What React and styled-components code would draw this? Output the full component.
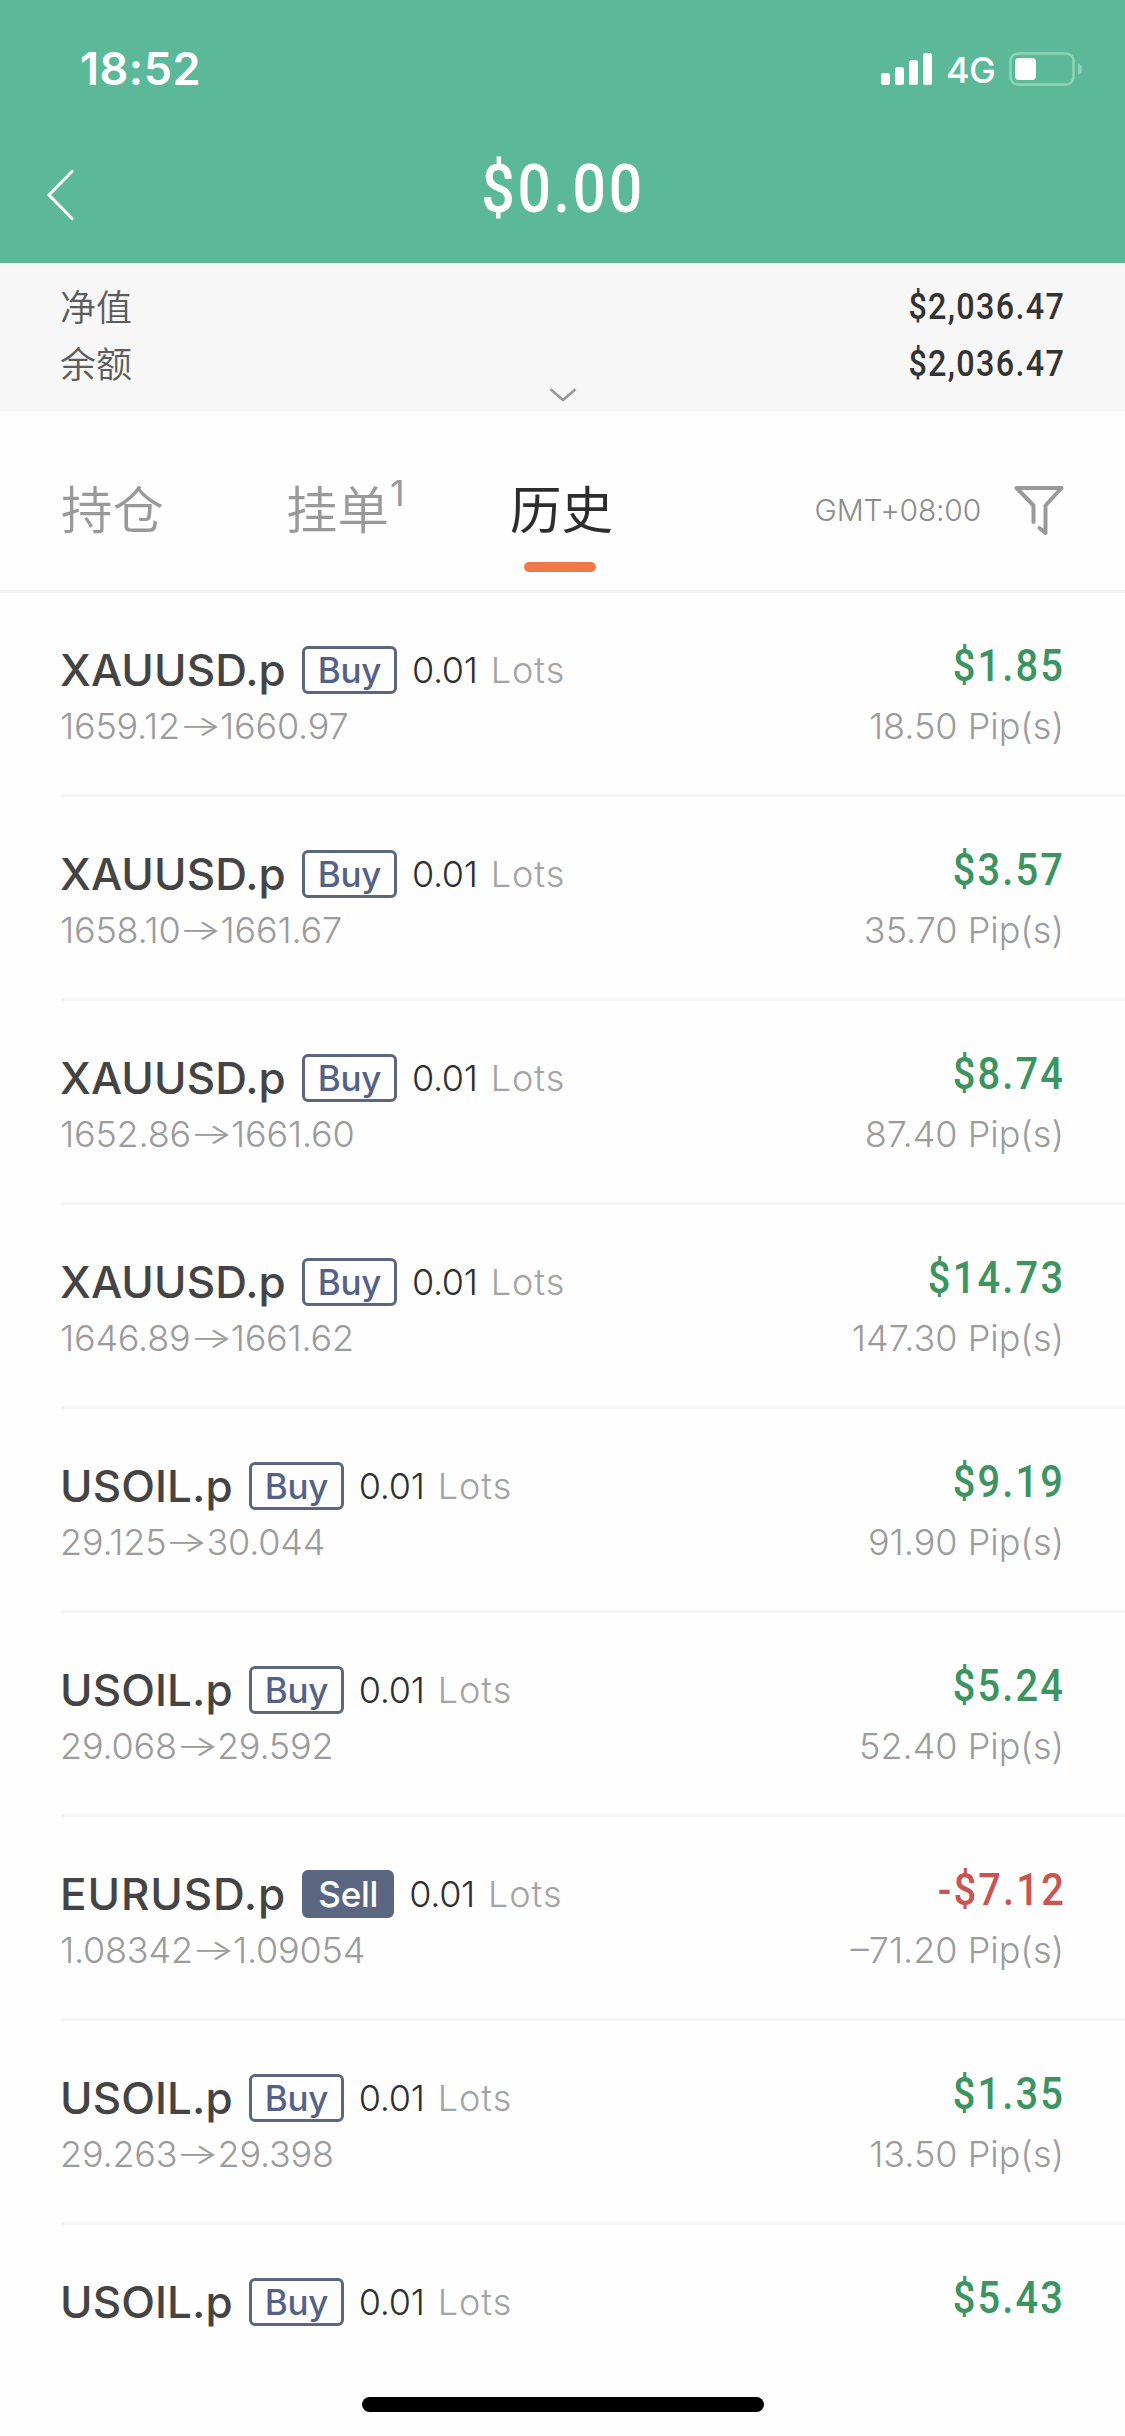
import React from "react";
import styled, { createGlobalStyle } from "styled-components";

const sans = `Inter, "Noto Sans CJK SC", sans-serif`;
const numeric = `Roboto, "Noto Sans CJK SC", sans-serif`;

const GlobalStyle = createGlobalStyle`
  * { box-sizing: border-box; }
  body { margin: 0; background: #fefefe; font-family: ${sans}; }
`;

const Screen = styled.div`
  display: flex;
  flex-direction: column;
  position: relative;
  width: 1125px;
  height: 2436px;
  overflow: hidden;
  background: #fefefe;
`;

const Header = styled.header`
  height: 263px;
  background: #5bb899;
  color: #fff;
`;

const StatusBar = styled.div`
  display: flex;
  align-items: center;
  justify-content: space-between;
  height: 138px;
  padding: 0 43px 0 80px;
`;

const Clock = styled.span`
  font-size: 45px;
  font-weight: 600;
  line-height: 54px;
  letter-spacing: 0.5px;
`;

const StatusIcons = styled.div`
  display: flex;
  align-items: center;
`;

const Network = styled.span`
  margin: 2px 14px 0 14px;
  font-size: 36px;
  font-weight: 450;
  line-height: 44px;
  letter-spacing: -0.8px;
`;

const NavBar = styled.div`
  display: grid;
  grid-template-columns: 120px 1fr 120px;
  align-items: center;
  height: 114px;
`;

const BackButton = styled.button`
  display: flex;
  padding: 0 0 0 45px;
  border: 0;
  background: none;
`;

/* Condensed figures: Roboto narrowed, with looser tracking */
const Profit = styled.h1`
  margin: -13px 0 0;
  text-align: center;
  font-family: ${numeric};
  font-size: 67px;
  font-weight: 500;
  line-height: 80px;
  letter-spacing: 0.045em;
  text-indent: 0.02em;
  transform: scaleX(0.88);
`;

const Summary = styled.section`
  display: flex;
  flex-direction: column;
  align-items: center;
  height: 148px;
  padding: 15px 61px 0 60px;
  background: #f7f7f7;
`;

const SummaryRow = styled.div`
  display: flex;
  justify-content: space-between;
  align-items: center;
  width: 100%;
  height: 57px;
`;

const SummaryLabel = styled.span`
  margin-top: -4px;
  font-family: "Noto Sans CJK SC", sans-serif;
  font-size: 36px;
  font-weight: 350;
  line-height: 54px;
  color: #5c5c5c;
`;

const SummaryValue = styled.span`
  margin-right: -0.025em;
  font-family: ${numeric};
  font-size: 37px;
  font-weight: 500;
  line-height: 54px;
  letter-spacing: 0.04em;
  color: #333;
  transform: scaleX(0.875);
  transform-origin: right center;
`;

const Tabs = styled.nav`
  display: flex;
  align-items: flex-start;
  height: 182px;
  padding: 63px 61px 0;
  border-bottom: 3px solid #f3f3f3;
`;

const Tab = styled.div`
  display: flex;
  flex-direction: column;
  align-items: center;
  margin-right: ${(p) => p.$gap || 0}px;
  color: ${(p) => (p.$active ? "#2d2d2d" : "#999")};
`;

const TabLabel = styled.span`
  display: flex;
  height: 66px;
  font-family: "Noto Sans CJK SC", sans-serif;
  font-size: 51.5px;
  font-weight: ${(p) => (p.$active ? 400 : 350)};
  line-height: 66px;
`;

const TabCount = styled.sup`
  width: 18px;
  margin: 4px 0 0 1px;
  font-family: Inter, sans-serif;
  font-size: 36px;
  font-weight: 400;
  line-height: 30px;
`;

const Underline = styled.i`
  width: 72px;
  height: 10px;
  margin: 22px 4px 0 0;
  border-radius: 5px;
  background: #f0794b;
`;

const Filters = styled.div`
  display: flex;
  align-items: center;
  margin: 9px 0 0 auto;
  gap: 33px;
  height: 54px;
`;

const Zone = styled.span`
  font-size: 30px;
  font-weight: 300;
  letter-spacing: -0.2px;
  color: #8c8c8c;
`;

const List = styled.main`
  display: flex;
  flex-direction: column;
`;

const Row = styled.article`
  display: flex;
  justify-content: space-between;
  height: 204px;
  margin-left: 61px;
  padding-right: 61px;
  border-bottom: 3px solid #f5f5f5;

  &:last-child {
    border-bottom: 0;
  }
`;

const Left = styled.div`
  margin-left: -1px;
  padding-top: 53px;
`;

const Right = styled.div`
  display: flex;
  flex-direction: column;
  align-items: flex-end;
  padding-top: 49px;
`;

const TitleLine = styled.div`
  display: flex;
  align-items: center;
  height: 48px;
`;

const SymbolName = styled.span`
  font-size: 44px;
  font-weight: 500;
  line-height: 48px;
  letter-spacing: ${(p) => p.$tracking}px;
  color: #444;
`;

const Badge = styled.span`
  display: flex;
  align-items: center;
  justify-content: center;
  width: ${(p) => (p.$sell ? 92 : 95)}px;
  height: 48px;
  margin: 0 15px 0 16px;
  border: 3px solid #5b6780;
  border-radius: 6px;
  background: ${(p) => (p.$sell ? "#5b6780" : "transparent")};
  color: ${(p) => (p.$sell ? "#fff" : "#546289")};
  font-size: 35px;
  font-weight: 500;
  line-height: 42px;
  letter-spacing: -0.3px;
`;

const Lots = styled.span`
  font-size: 36px;
  font-weight: 350;
  line-height: 48px;
  color: #2e2e2e;
  letter-spacing: -0.3px;
`;

const LotsUnit = styled.span`
  margin-left: 13px;
  font-size: 36px;
  font-weight: 300;
  line-height: 48px;
  letter-spacing: 1px;
  color: #a3a3a3;
`;

const Detail = styled.div`
  margin-top: ${(p) => p.$top}px;
  font-size: 36px;
  font-weight: 300;
  line-height: 40px;
  letter-spacing: ${(p) => p.$spacing || 0}px;
  white-space: nowrap;
  color: #9b9b9b;
`;

const Arrow = styled.span`
  display: inline-block;
  margin: 0 3px;
  transform: scale(1.28, 0.8);
`;

const Amount = styled.div`
  margin-right: -0.035em;
  font-family: ${numeric};
  font-size: 45px;
  font-weight: 500;
  line-height: 48px;
  letter-spacing: 0.055em;
  color: ${(p) => (p.$loss ? "#c95450" : "#3c9460")};
  transform: scaleX(0.885);
  transform-origin: right center;
`;

const HomeIndicator = styled.div`
  position: absolute;
  left: 362px;
  bottom: 24px;
  width: 402px;
  height: 15px;
  border-radius: 8px;
  background: #000;
`;

const SignalIcon = () => (
  <svg width="51" height="32" viewBox="0 0 51 32" fill="#fff">
    <rect x="0" y="20" width="9" height="12" rx="2.5" />
    <rect x="14" y="14" width="9" height="18" rx="2.5" />
    <rect x="28" y="7" width="9" height="25" rx="2.5" />
    <rect x="42" y="0" width="9" height="32" rx="2.5" />
  </svg>
);

const BatteryIcon = () => (
  <svg width="73" height="34" viewBox="0 0 73 34">
    <rect x="1.5" y="1.5" width="63" height="31" rx="7.5" fill="none" stroke="#8dd3b4" strokeWidth="2.6" />
    <rect x="6" y="6" width="21" height="22" rx="4" fill="#fff" />
    <path d="M69 11v12c2.500-1 4-3.500 4-6s-1.500-5-4-6z" fill="#8dd3b4" />
  </svg>
);

const BackIcon = () => (
  <svg width="30" height="54" viewBox="0 0 30 54" fill="none" stroke="#fff" strokeWidth="3.2" strokeLinecap="round" strokeLinejoin="round">
    <path d="M27 3.500L4 27l23 23.500" />
  </svg>
);

const ExpandIcon = styled(({ className }) => (
  <svg className={className} width="28" height="14" viewBox="0 0 28 14" fill="none" stroke="#999" strokeWidth="2.6">
    <path d="M1.500 1.200L14 12 26.500 1.200" />
  </svg>
))`
  margin: -4px 0 0 1px;
`;

const FilterIcon = () => (
  <svg width="50" height="51" viewBox="0 0 50 51" fill="none" stroke="#999" strokeWidth="4" strokeLinecap="round" strokeLinejoin="round">
    <path d="M19.500 37V20.500L2.500 3H47.500L31.500 20.500V48l-6-5" />
  </svg>
);

const trades = [
  { symbol: "XAUUSD.p", side: "Buy", open: "1659.12", close: "1660.97", amount: "$1.85", pips: "18.50 Pip(s)" },
  { symbol: "XAUUSD.p", side: "Buy", open: "1658.10", close: "1661.67", amount: "$3.57", pips: "35.70 Pip(s)" },
  { symbol: "XAUUSD.p", side: "Buy", open: "1652.86", close: "1661.60", amount: "$8.74", pips: "87.40 Pip(s)" },
  { symbol: "XAUUSD.p", side: "Buy", open: "1646.89", close: "1661.62", amount: "$14.73", pips: "147.30 Pip(s)" },
  { symbol: "USOIL.p", side: "Buy", open: "29.125", close: "30.044", amount: "$9.19", pips: "91.90 Pip(s)" },
  { symbol: "USOIL.p", side: "Buy", open: "29.068", close: "29.592", amount: "$5.24", pips: "52.40 Pip(s)" },
  { symbol: "EURUSD.p", side: "Sell", tracking: 0.9, open: "1.08342", close: "1.09054", amount: "-$7.12", pips: "–71.20 Pip(s)" },
  { symbol: "USOIL.p", side: "Buy", open: "29.263", close: "29.398", amount: "$1.35", pips: "13.50 Pip(s)" },
  { symbol: "USOIL.p", side: "Buy", amount: "$5.43" },
];

function TradeRow({ trade }) {
  return (
    <Row>
      <Left>
        <TitleLine>
          <SymbolName $tracking={trade.tracking ?? 0.1}>{trade.symbol}</SymbolName>
          <Badge $sell={trade.side === "Sell"}>{trade.side}</Badge>
          <Lots>0.01</Lots>
          <LotsUnit>Lots</LotsUnit>
        </TitleLine>
        {trade.open && (
          <Detail $top={12} $spacing={-0.2}>
            {trade.open}<Arrow>→</Arrow>{trade.close}
          </Detail>
        )}
      </Left>
      <Right>
        <Amount $loss={trade.amount.startsWith("-")}>{trade.amount}</Amount>
        {trade.pips && <Detail $top={16}>{trade.pips}</Detail>}
      </Right>
    </Row>
  );
}

export default function App() {
  return (
    <Screen>
      <GlobalStyle />
      <Header>
        <StatusBar>
          <Clock>18:52</Clock>
          <StatusIcons>
            <SignalIcon />
            <Network>4G</Network>
            <BatteryIcon />
          </StatusIcons>
        </StatusBar>
        <NavBar>
          <BackButton aria-label="返回"><BackIcon /></BackButton>
          <Profit>$0.00</Profit>
        </NavBar>
      </Header>
      <Summary>
        <SummaryRow>
          <SummaryLabel>净值</SummaryLabel>
          <SummaryValue>$2,036.47</SummaryValue>
        </SummaryRow>
        <SummaryRow>
          <SummaryLabel>余额</SummaryLabel>
          <SummaryValue>$2,036.47</SummaryValue>
        </SummaryRow>
        <ExpandIcon />
      </Summary>
      <Tabs>
        <Tab $gap={122}><TabLabel>持仓</TabLabel></Tab>
        <Tab $gap={102}>
          <TabLabel>挂单<TabCount>1</TabCount></TabLabel>
        </Tab>
        <Tab $active>
          <TabLabel $active>历史</TabLabel>
          <Underline />
        </Tab>
        <Filters>
          <Zone>GMT+08:00</Zone>
          <FilterIcon />
        </Filters>
      </Tabs>
      <List>
        {trades.map((trade, i) => <TradeRow key={i} trade={trade} />)}
      </List>
      <HomeIndicator />
    </Screen>
  );
}
